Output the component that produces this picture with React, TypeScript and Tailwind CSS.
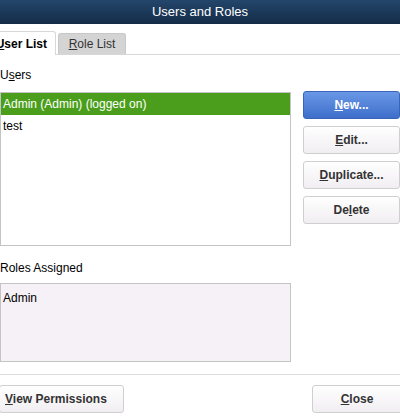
const font = { fontFamily: '"Liberation Sans", Arial, sans-serif' };

const Btn = ({
  children,
  primary = false,
  className = "",
}: {
  children: React.ReactNode;
  primary?: boolean;
  className?: string;
}) => (
  <button
    className={
      "h-[28px] rounded-[3px] border text-[12px] font-bold whitespace-nowrap " +
      (primary
        ? "border-[#3a64b8] bg-gradient-to-b from-[#6a98e6] to-[#3f6ecb] text-white "
        : "border-[#cfcfcf] bg-gradient-to-b from-[#ffffff] to-[#f1eef1] text-[#333] ") +
      className
    }
  >
    {children}
  </button>
);

const App = () => {
  return (
    <div className="w-[400px] h-[416px] bg-white overflow-hidden text-black" style={font}>
      <div className="h-[24px] bg-gradient-to-b from-[#23466b] to-[#152c47] flex items-center justify-center text-white text-[13px]">
        Users and Roles
      </div>
      <div className="h-[31px] flex items-end border-b border-[#d8d8d8]">
        <div className="h-[24px] w-[65px] -ml-[9px] border border-b-0 border-[#d8d8d8] bg-white rounded-t-[3px] flex items-center justify-end pr-[8px] text-[12px] font-bold mb-[-1px] whitespace-nowrap">
          <span>
            <u>U</u>ser List
          </span>
        </div>
        <div className="h-[21px] w-[68px] ml-[2px] bg-[#d4d4d4] border border-b-0 border-[#c8c8c8] rounded-t-[3px] flex items-center justify-center text-[12px] text-[#333] whitespace-nowrap">
          <span>
            <u>R</u>ole List
          </span>
        </div>
      </div>
      <div className="flex">
        <div className="w-[291px]">
          <div className="h-[37px] flex items-center pt-[2px] text-[12px]">
            U<u>s</u>ers
          </div>
          <div className="h-[154px] border border-[#c4c4c4] bg-white">
            <div className="h-[22px] bg-[#4b9e1c] text-white text-[12px] flex items-center pl-[2px]">
              Admin (Admin) (logged on)
            </div>
            <div className="h-[22px] text-[12px] flex items-center pl-[2px]">test</div>
          </div>
          <div className="h-[37px] flex items-center pt-[6px] text-[12px]">Roles Assigned</div>
          <div className="h-[79px] border border-[#c4c4c4] bg-[#f6f1f6] text-[12px] pl-[2px] pt-[5px]">
            Admin
          </div>
        </div>
        <div className="ml-[12px] w-[97px] pt-[36px] flex flex-col gap-[7px]">
          <Btn primary>
            <u>N</u>ew...
          </Btn>
          <Btn>
            <u>E</u>dit...
          </Btn>
          <Btn>
            <u>D</u>uplicate...
          </Btn>
          <Btn>
            De<u>l</u>ete
          </Btn>
        </div>
      </div>
      <div className="mt-[12px] border-t border-[#dcdcdc]"></div>
      <div className="mt-[10px] flex justify-between">
        <Btn className="w-[125px] -ml-[1px] text-left pl-[5px]">
          <u>V</u>iew Permissions
        </Btn>
        <Btn className="w-[90px] -mr-[2px]">
          <u>C</u>lose
        </Btn>
      </div>
    </div>
  );
};

export default App;
